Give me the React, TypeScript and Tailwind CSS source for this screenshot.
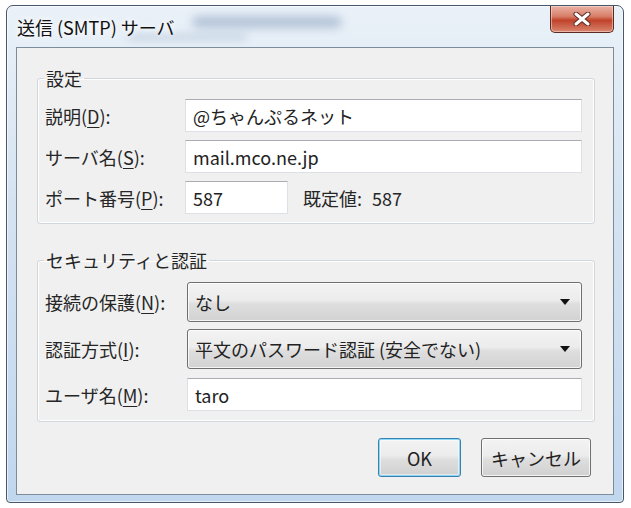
import React from "react";

const font = '"Noto Sans CJK JP", "Noto Sans", "Liberation Sans", sans-serif';

function Mn({ c }: { c: string }) {
  return <span className="underline underline-offset-[3px] decoration-1">{c}</span>;
}

function Label({ text, m }: { text: string; m: string }) {
  return (
    <div className="w-[147px] shrink-0 pl-[7px] text-[#262626]">
      {text}(<Mn c={m} />):
    </div>
  );
}

function TextBox({ value, className = "flex-1" }: { value: string; className?: string }) {
  return (
    <div
      className={`${className} h-[33px] flex items-center pl-[7px] bg-white border border-[#dde1e6] border-t-[#a9acb3] text-[#222]`}
    >
      {value}
    </div>
  );
}

function Combo({ value }: { value: string }) {
  return (
    <div className="flex-1 ml-[2px] h-[40px] flex items-center justify-between pl-[7px] pr-[11px] rounded-[3px] border border-[#707070] bg-[linear-gradient(#f3f3f3,#ececec_45%,#dedede_55%,#d2d2d2)] shadow-[inset_0_0_0_1px_rgba(255,255,255,0.75)] text-[#222]">
      <span>{value}</span>
      <svg width="10" height="6" viewBox="0 0 10 6">
        <path d="M0 0 H10 L5 6 Z" fill="#111" />
      </svg>
    </div>
  );
}

function Button({ label, primary, w }: { label: string; primary?: boolean; w: string }) {
  return (
    <div
      className={`${w} h-[39px] flex items-center justify-center rounded-[3px] border bg-[linear-gradient(#f3f3f3,#ececec_45%,#dedede_55%,#d0d0d0)] text-[#222] ${
        primary
          ? "border-[#3c7fb1] shadow-[inset_0_0_0_1px_rgba(110,210,245,0.8),inset_0_0_0_2px_rgba(255,255,255,0.5)]"
          : "border-[#707070] shadow-[inset_0_0_0_1px_rgba(255,255,255,0.75)]"
      }`}
    >
      {label}
    </div>
  );
}

export default function App() {
  return (
    <div className="w-[631px] h-[508px] bg-white pt-[5px] pl-[6px] text-[18px] leading-[22px]" style={{ fontFamily: font }}>
      <div className="w-[618px] h-[498px] flex flex-col rounded-t-[7px] rounded-b-[4px] border border-[#48586a] bg-[linear-gradient(#eaf1f8,#d5e3f1_40%,#c1d7ee)] shadow-[inset_0_0_0_1px_rgba(255,255,255,0.6)]">
        {/* title bar */}
        <div className="relative h-[41px] shrink-0 flex items-center pl-[10px] overflow-hidden">
          <span className="absolute left-[185px] top-[10px] w-[150px] h-[12px] rounded-full bg-[#7f98b8] opacity-50 blur-[5px]" />
          <span className="absolute left-[120px] top-[28px] w-[120px] h-[6px] rounded-full bg-[#9fb4cc] opacity-50 blur-[4px]" />
          <span className="relative text-[#111] [text-shadow:0_0_6px_#fff,0_0_10px_#fff]">送信 (SMTP) サーバ</span>
          <div className="absolute right-[9px] top-0 w-[64px] h-[27px] rounded-b-[5px] border border-t-0 border-[#5b2a22] bg-[linear-gradient(#eab3a6,#d77d67_40%,#c0422b_55%,#d9866f)] shadow-[inset_0_0_0_1px_rgba(255,230,220,0.5)] flex items-center justify-center">
            <svg width="18" height="14" viewBox="0 0 18 14">
              <path d="M3 2 L15 12 M15 2 L3 12" stroke="#5a2a22" strokeWidth="5" strokeLinecap="round" />
              <path d="M3 2 L15 12 M15 2 L3 12" stroke="#fff" strokeWidth="3" strokeLinecap="round" />
            </svg>
          </div>
        </div>

        {/* client area */}
        <div className="flex-1 mx-[9px] mb-[7px] border border-[#7d8c9b] bg-[#f0f0f0] pl-[20px] pr-[18px] flex flex-col">
          <fieldset className="mt-[19px] rounded-[3px] border border-[#d0d6dc] shadow-[inset_0_0_0_1px_#fff] pl-0 pr-[12px] pt-[10px] pb-[9px] flex flex-col gap-[8px]">
            <legend className="ml-[6px] px-[2px] text-[#262626]">設定</legend>
            <div className="flex items-center">
              <Label text="説明" m="D" />
              <TextBox value="@ちゃんぷるネット" />
            </div>
            <div className="flex items-center">
              <Label text="サーバ名" m="S" />
              <TextBox value="mail.mco.ne.jp" />
            </div>
            <div className="flex items-center">
              <Label text="ポート番号" m="P" />
              <TextBox value="587" className="w-[103px]" />
              <span className="ml-[15px] text-[#262626]">既定値:</span>
              <span className="ml-[10px] text-[#262626]">587</span>
            </div>
          </fieldset>

          <fieldset className="mt-[25px] rounded-[3px] border border-[#d0d6dc] shadow-[inset_0_0_0_1px_#fff] pl-0 pr-[12px] pt-[11px] pb-[10px] flex flex-col">
            <legend className="ml-[6px] px-[2px] text-[#262626]">セキュリティと認証</legend>
            <div className="flex items-center">
              <Label text="接続の保護" m="N" />
              <Combo value="なし" />
            </div>
            <div className="flex items-center mt-[7px]">
              <Label text="認証方式" m="I" />
              <Combo value="平文のパスワード認証 (安全でない)" />
            </div>
            <div className="flex items-center mt-[9px]">
              <Label text="ユーザ名" m="M" />
              <TextBox value="taro" className="flex-1 ml-[2px]" />
            </div>
          </fieldset>

          <div className="mt-[16px] pr-[4px] flex justify-end gap-[20px]">
            <Button label="OK" primary w="w-[83px]" />
            <Button label="キャンセル" w="w-[110px]" />
          </div>
        </div>
      </div>
    </div>
  );
}
